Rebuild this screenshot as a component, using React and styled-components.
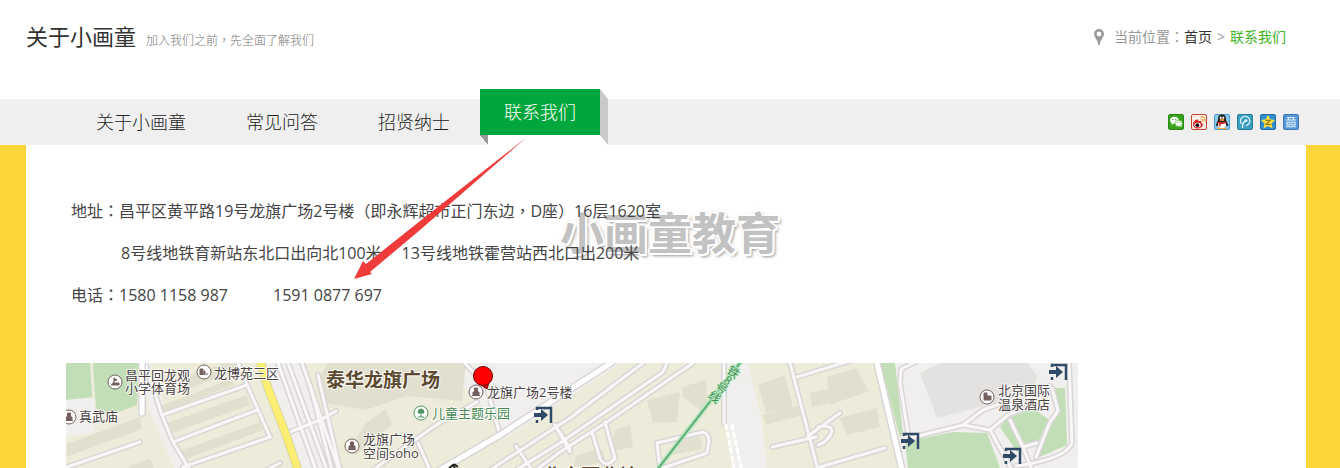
import React from 'react';
import styled, { createGlobalStyle } from 'styled-components';

const fontStack = '"Open Sans", "Noto Sans CJK SC", sans-serif';

const GlobalStyle = createGlobalStyle`
  * {
    box-sizing: border-box;
  }
  html {
    overflow: hidden;
  }
  body {
    margin: 0;
    background: #fff;
    color: #444;
    font-family: ${fontStack};
  }
  a {
    color: inherit;
    text-decoration: none;
  }
`;

// Centred full-width punctuation
const Mark = styled.span`
  font-family: "Noto Sans CJK TC", sans-serif;
  line-height: 1;
`;

const Header = styled.header`
  display: flex;
  justify-content: space-between;
  padding: 20px 54px 45px 26px;
`;

const Heading = styled.div`
  display: flex;
  align-items: baseline;
  gap: 10px;
`;

const Title = styled.h1`
  margin: 0;
  color: #333;
  font-size: 22px;
  font-weight: 400;
  line-height: 32px;
`;

const Subtitle = styled.span`
  color: #777;
  font-size: 12px;
  font-weight: 300;
`;

const Breadcrumb = styled.nav`
  display: flex;
  align-items: center;
  height: 34px;
  color: #999;
  font-size: 14px;
  line-height: 20px;

  svg {
    margin-right: 10px;
  }
`;

const Crumb = styled.a`
  color: ${({ $current }) => ($current ? '#3fb31f' : '#333')};
`;

const Separator = styled.span`
  width: 18px;
  text-align: center;
`;

const NavBar = styled.div`
  display: flex;
  justify-content: space-between;
  align-items: center;
  height: 46px;
  padding: 0 41px 0 66px;
  background: #efefef;
`;

const Tabs = styled.ul`
  display: flex;
  margin: 0;
  padding: 0;
  height: 46px;
  list-style: none;
`;

const Tab = styled.li`
  color: #222;
  font-size: 18px;
  font-weight: 300;
  line-height: 46px;

  a {
    display: block;
    padding: 0 30px;
  }
`;

const ActiveTab = styled(Tab)`
  position: relative;
  height: 56px;
  margin-top: -10px;
  padding-right: 8px;
  background: #fff;
  color: #fff;

  a {
    padding: 0 24px;
    background: #00a73c;
  }

  &::before,
  &::after {
    content: '';
    position: absolute;
    width: 8px;
  }
  &::before {
    left: 0;
    bottom: 0;
    height: 10px;
    background: linear-gradient(to bottom left, #999 50%, #efefef 50%);
  }
  &::after {
    right: 0;
    top: 0;
    height: 56px;
    background: #c9c9c9;
    clip-path: polygon(0 0, 100% 10px, 100% 100%, 0 46px);
  }
`;

const Share = styled.div`
  display: flex;
  gap: 7px;

  a,
  svg {
    display: block;
  }
`;

const Main = styled.main`
  padding: 0 34px 0 26px;
  background: #fdd63b;
`;

const Panel = styled.section`
  position: relative;
  padding: 45px 40px 0;
  background: #fff;
`;

const Lines = styled.address`
  position: relative;
  padding-left: 5px;
  font-size: 16px;
  font-style: normal;
  line-height: 42px;
  white-space: nowrap;
`;

const Line = styled.div`
  display: flex;
  gap: ${({ $gap }) => $gap || 0}px;
  padding-left: ${({ $indent }) => $indent || 0}px;
`;

const MapFrame = styled.figure`
  margin: 47px 0 0;
  max-width: 1012px;

  svg {
    display: block;
    width: 100%;
    font-family: ${fontStack};
  }
`;

const Watermark = styled.div`
  position: absolute;
  left: 534px;
  top: 56px;
  color: #c2c2c2;
  font-size: 44px;
  font-weight: 700;
  line-height: 64px;
  text-shadow: 1px 1px 0 #fff, -1px -1px 0 #fff, 1px -1px 0 #fff,
    -1px 1px 0 #fff, 2px 0 0 #fff, -2px 0 0 #fff, 0 2px 0 #fff,
    0 -2px 0 #fff, 2px 2px 0 #fff, 3px 3px 3px #999, 0 0 4px #ccc;
  pointer-events: none;
`;

const Arrow = styled.svg`
  position: absolute;
  left: 324px;
  top: -10px;
  pointer-events: none;
`;

const WechatIcon = () => (
  <svg width="16" height="16" viewBox="0 0 16 16">
    <rect x=".5" y=".5" width="15" height="15" rx="1.5" fill="#38a51c" stroke="#2b8715" />
    <ellipse cx="6.4" cy="6.3" rx="4.2" ry="3.5" fill="#fff" />
    <path d="M4 9l-.7 2 2.4-1.3z" fill="#fff" />
    <ellipse cx="10.7" cy="9.4" rx="3.7" ry="3.1" fill="#fff" stroke="#38a51c" strokeWidth=".6" />
    <path d="M12 12l1.6 1.3-.4-2z" fill="#fff" />
    <g fill="#38a51c">
      <circle cx="5" cy="5.4" r=".6" />
      <circle cx="7.8" cy="5.4" r=".6" />
      <circle cx="9.5" cy="8.6" r=".5" />
      <circle cx="11.9" cy="8.6" r=".5" />
    </g>
  </svg>
);

const WeiboIcon = () => (
  <svg width="16" height="16" viewBox="0 0 16 16">
    <rect x=".5" y=".5" width="15" height="15" rx="1.5" fill="#fbeee4" stroke="#c9442f" />
    <path d="M2 10c0-2.5 3.500-5 5-4.300.700.400.300 1.500.300 1.500s3-1 3.200.600c0 .700-.400 1-.400 1s2 .400 1.700 2.200C11.500 13 9 14.500 6.600 14.500S2 12.600 2 10z" fill="#d9252b" />
    <ellipse cx="6.6" cy="11" rx="3.2" ry="2.3" fill="#fff" />
    <circle cx="6.3" cy="11.2" r="1.9" fill="#111" />
    <path d="M9.800 5.300c1.600-.200 2.600.800 2.300 2.300M9.700 3c3-.4 5 1.800 4.400 4.800" fill="none" stroke="#efa03c" strokeWidth="1.2" />
  </svg>
);

const QqIcon = () => (
  <svg width="16" height="16" viewBox="0 0 16 16">
    <rect x=".5" y=".5" width="15" height="15" rx="1.5" fill="#8cc9ee" stroke="#4a9bd0" />
    <path d="M3.300 8L1.600 11.500l1.400.5zM12.700 8l1.700 3.500-1.400.5z" fill="#111" />
    <ellipse cx="8" cy="9.500" rx="5.2" ry="5" fill="#181818" />
    <ellipse cx="8" cy="11" rx="4.1" ry="3.700" fill="#fff" />
    <ellipse cx="8" cy="4.800" rx="3.900" ry="4.200" fill="#181818" />
    <ellipse cx="6.700" cy="3.800" rx="1" ry="1.300" fill="#fff" />
    <ellipse cx="9.300" cy="3.800" rx="1" ry="1.300" fill="#fff" />
    <ellipse cx="8" cy="6.100" rx="2.500" ry="1" fill="#f5a623" />
    <path d="M3.800 7.300q4.200 2.200 8.400 0l.4 1.500q-3 1.500-6 1.100v2.300H4.900V9.500l-1.500-.7z" fill="#d92b22" />
    <path d="M3.500 14.200q2-1.400 4 0v1h-4zM8.500 14.200q2-1.400 4 0v1h-4z" fill="#f0a01f" />
  </svg>
);

const TencentWeiboIcon = () => (
  <svg width="16" height="16" viewBox="0 0 16 16">
    <rect x=".5" y=".5" width="15" height="15" rx="1.5" fill="#3a9fbe" stroke="#237e9c" />
    <path d="M4.500 10A4.700 4.700 0 1 1 9 11.600" fill="none" stroke="#e8f8fc" strokeWidth="1.200" />
    <path d="M5.700 14.200c-.6-3.600.6-6.200 3-7.500" fill="none" stroke="#e8f8fc" strokeWidth="1.400" />
    <circle cx="9.100" cy="6.600" r="1.300" fill="#e8f8fc" />
  </svg>
);

const QzoneIcon = () => (
  <svg width="16" height="16" viewBox="0 0 16 16">
    <rect x=".5" y=".5" width="15" height="15" rx="1.5" fill="#2d8ed2" stroke="#1c6cab" />
    <path d="M8 .8l2.200 4.500 5 .6-3.700 3.500 1 5L8 12 3.500 14.400l1-5L.8 5.900l5-.6z" fill="#ffdf3e" />
    <path d="M5.500 6.300h4.700L6 10.300h5" fill="none" stroke="#9a7a17" strokeWidth="1.200" />
  </svg>
);

const RenjianIcon = () => (
  <svg width="16" height="16" viewBox="0 0 16 16">
    <rect x=".5" y=".5" width="15" height="15" rx="1.5" fill="#5796d6" stroke="#3c78b8" />
    <path d="M4 3.500h8M2.800 6h10.400M4 13.500V8.200h8v5.300M6 10.300h4v2.400H6zM5.500 3.500v2.500M10.500 3.500v2.500" fill="none" stroke="#eaf4ff" strokeWidth="1.100" />
  </svg>
);

const shares = [
  { name: '微信', Icon: WechatIcon },
  { name: '新浪微博', Icon: WeiboIcon },
  { name: 'QQ', Icon: QqIcon },
  { name: '腾讯微博', Icon: TencentWeiboIcon },
  { name: 'QQ空间', Icon: QzoneIcon },
  { name: '人间网', Icon: RenjianIcon },
];

const buildings = [
  '101,60 181,32 184,42 106,70',
  '112,89 194,59 197,67 117,97',
  '94,43 165,16 168,22 96,49',
  '118,14 160,0 170,0 171,8 122,26',
  '1,81 74,54 76,66 0,94',
  '64,102 84,96 88,105 62,105',
  '250,22 262,0 400,0 396,38 340,33 300,47 256,40',
  '300,60 320,46 326,62 312,72 290,92 282,88',
  '581,37 614,29 611,59 587,60',
  '616,24 640,17 642,42 634,47 617,34',
  '549,67 564,62 567,84 544,89',
  '510,92 536,86 540,99 508,104',
  '692,22 719,12 727,45 700,50',
  '697,52 734,42 736,52 700,62',
  '761,14 790,5 803,28 764,42',
  '774,55 811,45 814,64 781,72',
  '608,79 634,74 636,86 606,92',
  '744,30 762,26 764,40 746,44',
];

const roads = [
  'M79 0L96 52 107 79 124 107',
  'M96 52L181 22',
  'M107 79L191 47',
  'M117 104L204 74',
  'M172 0Q176 8 181 22L204 74',
  'M-2 105L74 79',
  'M200 107L214 100',
  'M212 0L250 107',
  'M222 0L261 107',
  'M236 0L273 107',
  'M224 69L254 57 270 48',
  'M244 22L266 107',
  'M252 12L274 107',
  'M399 0L421 25 434 72',
  'M411 39L370 62 307 107',
  'M352 80L364 107',
  'M489 62L504 89',
  'M450 83L466 107',
  'M424 107L504 55 577 0',
  'M450 107L494 80 597 9 601 0',
  'M470 107L494 89 544 57 627 0',
  'M494 69L504 86',
  'M526 69L534 96Q541 106 549 95L539 59',
  'M594 104L591 80 637 69Q643 71 643 78L641 90 594 106',
  'M658 0V60',
  'M724 0L752 107',
  'M731 14L790 -4',
  'M706 84L750 74',
  'M742 73L774 50',
  'M752 64Q769 61 765 71 760 80 752 82',
  'M754 104L819 85',
  'M851 -2L835 6 834 20 842 70',
  'M844 75L897 62 924 67 946 107',
  'M897 62L917 47 984 23',
  'M924 67L942 52 967 42',
  'M944 57L957 84 971 80',
  'M986 25L992 48 984 59 970 94',
  'M957 84L966 107',
  'M1003 0L1006 80Q1000 96 950 103',
];

const mainRoads = 'M76 0V50M374 107L434 72 545 0M811 0L836 107';
const yellowRoad = 'M195 0L202 25 219 69 232 107';

const labels = [
  { x: 59, y: 17, text: '昌平回龙观' },
  { x: 59, y: 30, text: '小学体育场' },
  { x: 148, y: 15, text: '龙博苑三区' },
  { x: 13, y: 58, text: '真武庙' },
  { x: 421, y: 34, text: '龙旗广场2号楼' },
  { x: 366, y: 55, text: '儿童主题乐园', color: '#458a52' },
  { x: 297, y: 81, text: '龙旗广场' },
  { x: 297, y: 95, text: '空间soho' },
  { x: 932, y: 32, text: '北京国际' },
  { x: 932, y: 46, text: '温泉酒店' },
];

const exits = [[477, 52], [992, 9], [844, 78], [946, 93]];

const PoiIcon = ({ x, y, color = '#75605e', d = 'M-4 3.500H4M-3 3V0h6v3M-1.500 0v-4h3v4' }) => (
  <g transform={`translate(${x} ${y})`}>
    <circle r="7" fill="#fff" stroke={color} strokeWidth="1" />
    <path d={d} fill={color} stroke={color} strokeWidth="1" />
  </g>
);

const ExitIcon = ({ x, y }) => (
  <g transform={`translate(${x} ${y})`} fill="none" stroke="#2f4a68">
    <path d="M-6-5V-7H8V8M-6 5V8" strokeWidth="2.500" />
    <path d="M-9 0H0" strokeWidth="4" />
    <path d="M-2-6L5 0-2 6z" fill="#2f4a68" stroke="none" />
  </g>
);

const Terrain = () => (
  <g>
    <rect width="1012" height="105" fill="#edecda" />
    <g fill="#f0efed">
      <path d="M0 37L29 35 29 70 0 74zM74 0H84L120 105H108L84 50z" />
      <path d="M198 0H238L273 105H232z" />
      <path d="M377 0H555L440 75 424 50 410 38z" />
      <path d="M661 0H682L696 59 701 105H669L661 59z" />
      <path d="M829 0H1012V105H834z" />
    </g>
    <g fill="#e1e0ce">
      {buildings.map((points) => (
        <polygon key={points} points={points} />
      ))}
    </g>
    <path d="M854 10L874 0H961L971 12 967 30 871 55z" fill="#e3e2e0" />
    <g fill="#c1deb6">
      <path d="M0 0H24L26 34 0 37zM27 0H74L71 42 44 52 30 45z" />
      <path d="M814 0H829L837 70 834 74z" />
      <path d="M839 79L887 69 921 70 934 105H842z" />
      <path d="M987 25L999 25 1001 82 971 95 984 59 992 49z" />
      <path d="M940 56L967 45 983 57 972 79 951 89 934 64z" />
    </g>
  </g>
);

const Roads = () => (
  <g fill="none" strokeLinejoin="round" strokeLinecap="round">
    <g stroke="#dad5d6" strokeWidth="6">
      {roads.map((d) => (
        <path key={d} d={d} />
      ))}
    </g>
    <g stroke="#f8f6f6" strokeWidth="3">
      {roads.map((d) => (
        <path key={d} d={d} />
      ))}
    </g>
    <path d={mainRoads} stroke="#dad5d6" strokeWidth="8" />
    <path d={mainRoads} stroke="#fff" strokeWidth="5" />
    <path d={yellowRoad} stroke="#dcd6a0" strokeWidth="9" />
    <path d={yellowRoad} stroke="#fbee70" strokeWidth="7" />
    <path d="M660 62L668 105M666 62L675 105" stroke="#fff" strokeWidth="3" strokeDasharray="4 4" />
    <path d="M674 0L591 107" stroke="#b9e8c0" strokeWidth="5" />
    <path d="M674 0L591 107" stroke="#5fae75" strokeWidth="2" />
  </g>
);

const Labels = () => (
  <g>
    <PoiIcon x={49} y={19} d="M-4 3H4V1H-1V-4L2-2-1-1" />
    <PoiIcon x={138} y={9} d="M-4 3V-3H-1V3M0 3V-1H1V3M3 3V1" />
    <PoiIcon x={3} y={54} />
    <PoiIcon x={410} y={29} />
    <PoiIcon x={286} y={83} />
    <PoiIcon x={921} y={34} d="M-3 3V-4H0V-1H4V3z" />
    <PoiIcon x={355} y={50} color="#4f9560" d="M-3 4H3M0 4V0M-3 0Q-3-4 0-4 3-4 3 0z" />
    {exits.map(([x, y]) => (
      <ExitIcon key={x} x={x} y={y} />
    ))}
    <g stroke="#fff" strokeOpacity=".8" strokeWidth="2" strokeLinejoin="round" paintOrder="stroke">
      {labels.map(({ x, y, text, color }) => (
        <text key={text} x={x} y={y} fontSize="13" fill={color || '#4a4243'}>{text}</text>
      ))}
      <text x="260" y="24" fontSize="19" fontWeight="700" fill="#5c492f">泰华龙旗广场</text>
      <text x="477" y="120" fontSize="19" fontWeight="700" fill="#5c492f">北京西业坊</text>
      <text transform="translate(660 9) rotate(37)" fontSize="12" fill="#3f8f50" stroke="#c5efcb">
        <tspan x="0" y="0">铁</tspan>
        <tspan x="3" y="10">8</tspan>
        <tspan x="0" y="20">号</tspan>
        <tspan x="0" y="31">线</tspan>
      </text>
    </g>
    <path d="M383 105L387 102 389 105M388 101L392 104" fill="none" stroke="#222" strokeWidth="2" />
    <path d="M412 20L421 26 423 19z" fill="#e00" stroke="#600" />
    <circle cx="417" cy="13" r="9.500" fill="#f00" stroke="#600" />
  </g>
);

const App = () => (
  <>
    <GlobalStyle />
    <Header>
      <Heading>
        <Title>关于小画童</Title>
        <Subtitle>加入我们之前<Mark>，</Mark>先全面了解我们</Subtitle>
      </Heading>
      <Breadcrumb>
        <svg width="10" height="16" viewBox="0 0 10 16">
          <path fillRule="evenodd" d="M5 0a5 5 0 0 1 5 5c0 3-4 6.500-4.300 11H4.300C4 11.500 0 8 0 5a5 5 0 0 1 5-5zm0 2.600a2.400 2.400 0 1 0 0 4.800 2.400 2.400 0 0 0 0-4.800z" fill="#999" />
        </svg>
        <span>当前位置<Mark>：</Mark></span>
        <Crumb href="#home">首页</Crumb>
        <Separator>&gt;</Separator>
        <Crumb href="#contact" $current>联系我们</Crumb>
      </Breadcrumb>
    </Header>
    <NavBar>
      <Tabs>
        <Tab><a href="#about">关于小画童</a></Tab>
        <Tab><a href="#faq">常见问答</a></Tab>
        <Tab><a href="#jobs">招贤纳士</a></Tab>
        <ActiveTab><a href="#contact">联系我们</a></ActiveTab>
      </Tabs>
      <Share>
        {shares.map(({ name, Icon }) => (
          <a key={name} href="#share" aria-label={name}><Icon /></a>
        ))}
      </Share>
    </NavBar>
    <Main>
      <Panel>
        <Watermark>小画童教育</Watermark>
        <Lines>
          <Line>
            <span>
              地址<Mark>：</Mark>昌平区黄平路19号龙旗广场2号楼（即永辉超市正门东边<Mark>，</Mark>D座）16层1620室
            </span>
          </Line>
          <Line $indent={50} $gap={20}>
            <span>8号线地铁育新站东北口出向北100米</span>
            <span>13号线地铁霍营站西北口出200米</span>
          </Line>
          <Line $gap={45}>
            <span>电话<Mark>：</Mark>1580 1158 987</span>
            <span>1591 0877 697</span>
          </Line>
        </Lines>
        <MapFrame>
          <svg viewBox="0 0 1012 105">
            <Terrain />
            <Roads />
            <Labels />
          </svg>
        </MapFrame>
        <Arrow width="180" height="150" viewBox="0 0 180 150">
          <path d="M177 2L70 95 20 137 22 139 4 144 13 126 16 129 70 86z" fill="#ef3b39" />
        </Arrow>
      </Panel>
    </Main>
  </>
);

export default App;
